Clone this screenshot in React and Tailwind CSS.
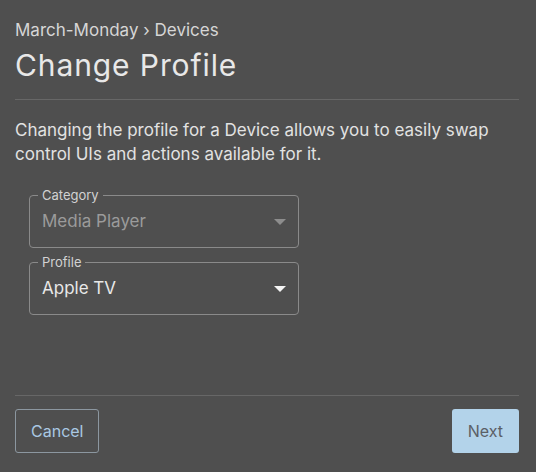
import React from "react";

function Caret({ className }) {
  return (
    <svg width="12" height="6" viewBox="0 0 12 6" className={className}>
      <path d="M0 0 L12 0 L6 6 Z" fill="currentColor" />
    </svg>
  );
}

function SelectField({ label, value, disabled }) {
  return (
    <fieldset className="w-[270px] border border-[#8a8a8a] rounded-[4px] px-[8px] pt-[6px] pb-[12px]">
      <legend className="px-[4px] text-[13px] leading-[15px] text-[#d2d2d2]">{label}</legend>
      <div className="flex items-center justify-between px-[4px] h-[26px]">
        <span className={disabled ? "text-[17px] text-[#9b9b9b]" : "text-[17px] text-[#e8e8e8]"}>{value}</span>
        <Caret className={disabled ? "text-[#8d8d8d]" : "text-[#f4f4f4]"} />
      </div>
    </fieldset>
  );
}

export default function App() {
  return (
    <div
      className="w-[536px] h-[472px] bg-[#4f4f4f] flex flex-col pl-[15px] pr-[17px] pt-[20px] pb-[19px]"
      style={{ fontFamily: "Inter, 'Noto Sans', sans-serif" }}
    >
      <div className="text-[17px] leading-[20px] text-[#d6d6d6]">March-Monday › Devices</div>
      <h1 className="mt-[7px] text-[30px] leading-[36px] tracking-[0.03em] text-[#e8e8e8] font-normal">Change Profile</h1>
      <div className="mt-[16px] h-px bg-[#676767]" />
      <p className="mt-[18px] text-[17px] leading-[24px] text-[#e2e2e2]">
        Changing the profile for a Device allows you to easily swap control UIs and actions available for it.
      </p>
      <div className="mt-[22px] ml-[14px] flex flex-col gap-[7px]">
        <SelectField label="Category" value="Media Player" disabled />
        <SelectField label="Profile" value="Apple TV" />
      </div>
      <div className="flex-1" />
      <div className="h-px bg-[#676767]" />
      <div className="mt-[13px] flex justify-between">
        <button className="h-[44px] px-[15px] border border-[#8c97a0] rounded-[3px] text-[16px] text-[#a9c8e3]">
          Cancel
        </button>
        <button className="h-[44px] px-[16px] bg-[#b3d3ea] rounded-[3px] text-[16px] text-[#5b6066]">
          Next
        </button>
      </div>
    </div>
  );
}
